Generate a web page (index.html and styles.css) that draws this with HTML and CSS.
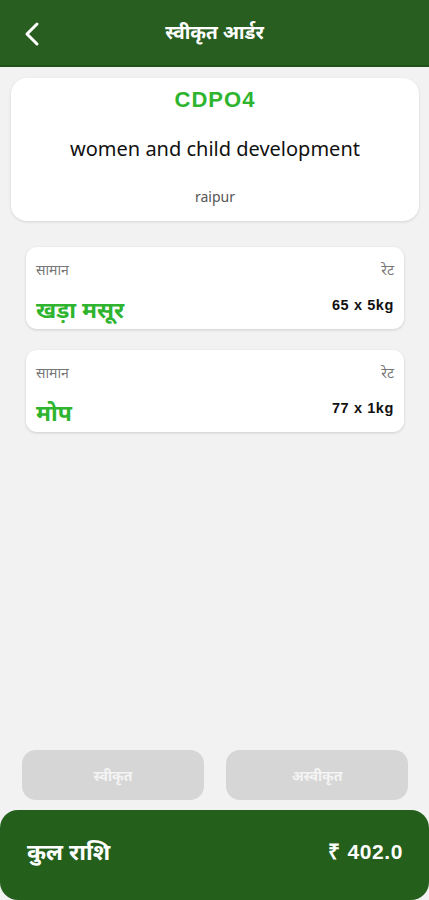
FILE: index.html
```html
<!DOCTYPE html>
<html>
<head>
<meta charset="utf-8">
<link rel="stylesheet" href="styles.css">
</head>
<body>
<div class="app">
  <header class="topbar">
    <button class="back" aria-label="back">
      <svg width="20" height="26" viewBox="0 0 20 26"><path d="M15 3 L5 13 L15 23" fill="none" stroke="#fff" stroke-width="3" stroke-linecap="round" stroke-linejoin="round"/></svg>
    </button>
    <h1 class="title">स्वीकृत आर्डर</h1>
  </header>

  <main class="content">
    <section class="info-card">
      <div class="code">CDPO4</div>
      <div class="dept">women and child development</div>
      <div class="city">raipur</div>
    </section>

    <section class="items">
      <div class="item">
        <div class="row labels"><span>सामान</span><span>रेट</span></div>
        <div class="row values"><span class="name">खड़ा मसूर</span><span class="rate">65 x 5kg</span></div>
      </div>
      <div class="item">
        <div class="row labels"><span>सामान</span><span>रेट</span></div>
        <div class="row values"><span class="name">मोप</span><span class="rate">77 x 1kg</span></div>
      </div>
    </section>
  </main>

  <div class="actions">
    <button class="btn">स्वीकृत</button>
    <button class="btn">अस्वीकृत</button>
  </div>

  <footer class="total">
    <span class="total-label">कुल राशि</span>
    <span class="total-value">₹ 402.0</span>
  </footer>
</div>
</body>
</html>
```

FILE: styles.css
```css
* { box-sizing: border-box; }
html, body { margin: 0; padding: 0; }
body {
  background: #f2f2f2;
  font-family: "Noto Sans", "Noto Sans Devanagari", "Open Sans", sans-serif;
  width: 429px;
  height: 900px;
  overflow: hidden;
}
.app {
  display: flex;
  flex-direction: column;
  height: 900px;
}
.topbar {
  height: 67px;
  background: #285e20;
  border-bottom: 2px solid #1f5018;
  display: flex;
  align-items: center;
  justify-content: center;
  position: relative;
  flex-shrink: 0;
}
.back {
  position: absolute;
  left: 22px;
  top: 21px;
  background: none;
  border: 0;
  padding: 0;
  width: 20px;
  height: 26px;
}
.title {
  margin: 0;
  color: #fff;
  font-size: 19px;
  font-weight: 700;
  margin-top: -1px;
}
.content {
  flex: 1;
  padding: 11px 10px 0 11px;
}
.info-card {
  background: #fff;
  border-radius: 16px;
  box-shadow: 0 1px 3px rgba(0,0,0,0.12);
  height: 143px;
  display: flex;
  flex-direction: column;
  align-items: center;
  padding-top: 10px;
}
.code {
  color: #2eb42e;
  font-family: "Liberation Sans", Arial, sans-serif;
  font-weight: 700;
  font-size: 22px;
  letter-spacing: 1px;
  line-height: 24px;
}
.dept {
  margin-top: 23px;
  font-size: 20px;
  color: #111;
  line-height: 28px;
}
.city {
  margin-top: 25px;
  font-size: 14px;
  color: #555;
  line-height: 18px;
}
.items {
  padding: 26px 15px 0 15px;
  display: flex;
  flex-direction: column;
  gap: 21px;
}
.item {
  background: #fff;
  border-radius: 11px;
  box-shadow: 0 1px 3px rgba(0,0,0,0.15);
  height: 82px;
  padding: 13px 10px 0 10px;
}
.row {
  display: flex;
  justify-content: space-between;
  align-items: baseline;
}
.labels span {
  font-size: 14px;
  color: #777;
  line-height: 20px;
}
.values { margin-top: 14px; }
.name {
  color: #2eb42e;
  font-size: 23px;
  font-weight: 700;
  line-height: 30px;
}
.rate {
  font-family: "Liberation Sans", Arial, sans-serif;
  font-weight: 700;
  font-size: 14.5px;
  letter-spacing: 0.6px;
  color: #111;
  position: relative;
  top: -8px;
}
.actions {
  display: flex;
  gap: 22px;
  padding: 0 21px 0 22px;
  margin-bottom: 10px;
}
.btn {
  flex: 1;
  height: 50px;
  border: 0;
  border-radius: 14px;
  background: #d6d6d6;
  color: #f4f4f4;
  font-family: inherit;
  font-size: 14px;
  font-weight: 700;
}
.total {
  height: 90px;
  background: #245f1c;
  border-radius: 18px;
  display: flex;
  justify-content: space-between;
  align-items: center;
  padding: 0 26px 8px 27px;
  color: #fff;
  flex-shrink: 0;
}
.total-label {
  font-size: 23px;
  font-weight: 700;
}
.total-value {
  font-family: "Liberation Sans", Arial, sans-serif;
  font-size: 21px;
  font-weight: 700;
  letter-spacing: 0.6px;
}
```
